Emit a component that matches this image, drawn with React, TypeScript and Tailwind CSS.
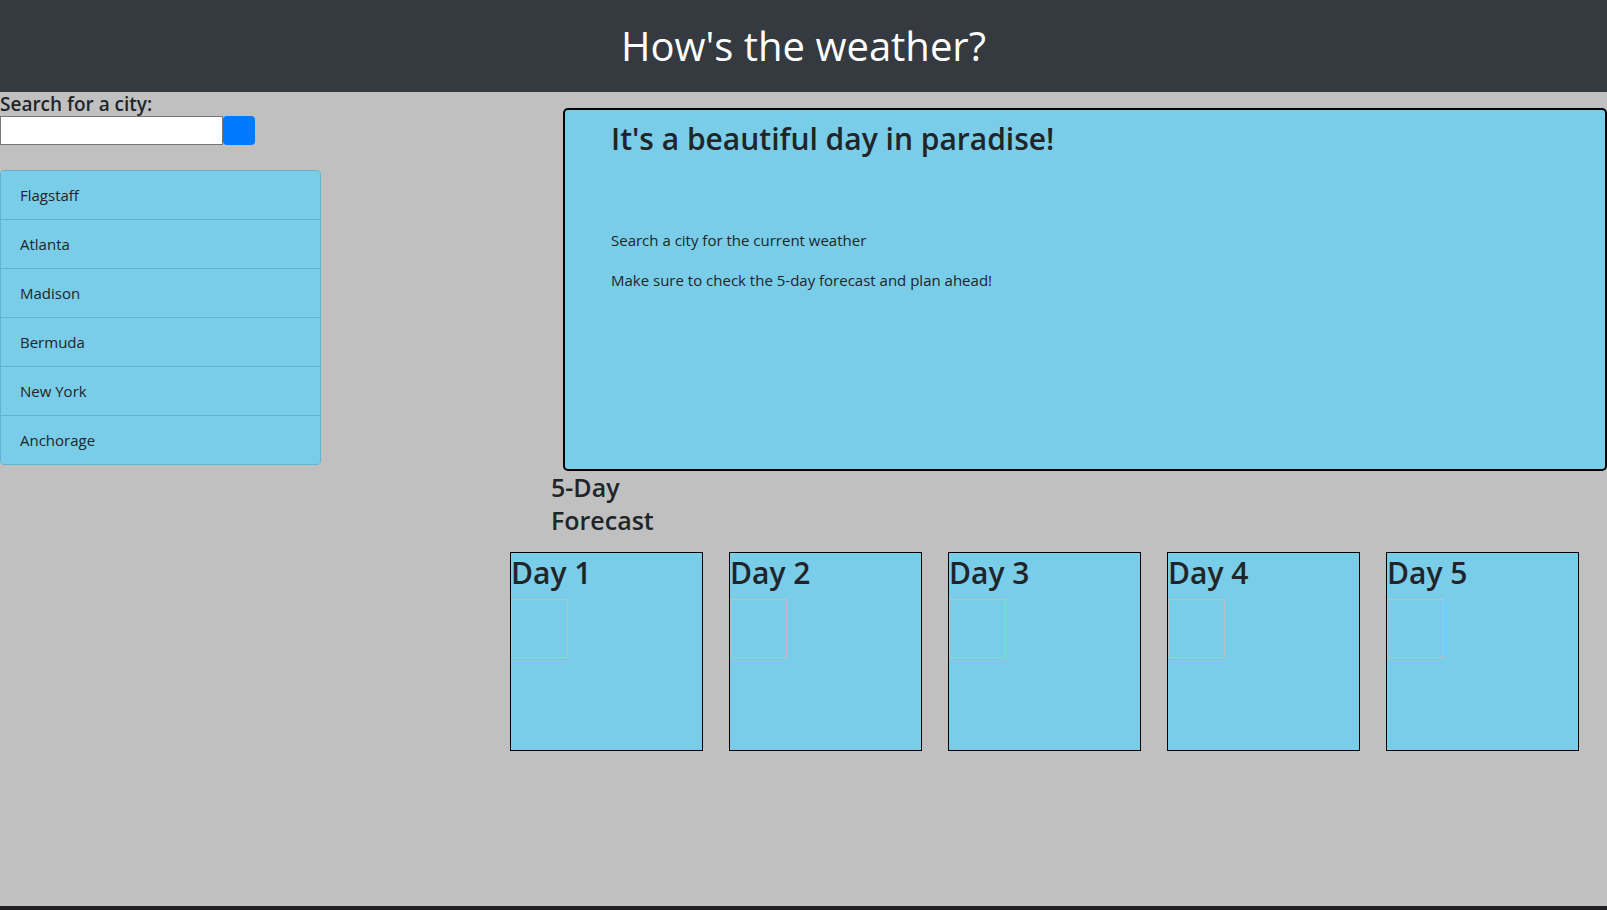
const cities = ["Flagstaff", "Atlanta", "Madison", "Bermuda", "New York", "Anchorage"];
const days = ["Day 1", "Day 2", "Day 3", "Day 4", "Day 5"];

function SearchPanel() {
  return (
    <aside className="w-[510px] shrink-0">
      <label className="block h-[24px] text-[19px] leading-[24px] font-semibold">
        Search for a city:
      </label>
      <div className="flex">
        <input
          type="text"
          className="w-[223px] h-[29px] bg-white border border-[#767676] outline-none"
        />
        <button className="w-[32px] h-[29px] bg-[#007bff] rounded-[4px]" />
      </div>
      <ul className="mt-[25px] w-[321px] rounded-[4px] border border-[#5db5d3] overflow-hidden">
        {cities.map((city, idx) => (
          <li
            key={city}
            className={
              "pl-[19px] flex items-center bg-[#7acde8] text-[15px] " +
              (idx > 0 ? "h-[49px] border-t border-[#5db5d3]" : "h-[48px]")
            }
          >
            {city}
          </li>
        ))}
      </ul>
    </aside>
  );
}

function Forecast() {
  return (
    <section>
      <h3 className="ml-[41px] w-[120px] text-[25px] leading-[33px] font-semibold">
        5-Day Forecast
      </h3>
      <div className="mt-[15px] flex gap-[26px]">
        {days.map((day) => (
          <div
            key={day}
            className="w-[193px] h-[199px] bg-[#7acde8] border border-black"
          >
            <h2 className="text-[30px] leading-[40px] font-semibold">{day}</h2>
            <div className="mt-[6px] w-[57px] h-[59px] border border-[#c4bfbf]" />
          </div>
        ))}
      </div>
    </section>
  );
}

export default function App() {
  return (
    <div
      className="min-h-[910px] flex flex-col bg-[#c0c0c0] text-[#212529]"
      style={{ fontFamily: "'Open Sans', 'Noto Sans', sans-serif" }}
    >
      <header className="h-[92px] bg-[#343a40] flex items-center justify-center">
        <h1 className="text-[40px] text-white font-normal">How's the weather?</h1>
      </header>
      <main className="flex-1 flex">
        <SearchPanel />
        <div className="flex-1 flex flex-col">
          <div className="mt-[16px] ml-[53px] h-[363px] bg-[#7acde8] border-2 border-black rounded-[5px] pl-[46px] pt-[10px]">
            <h2 className="text-[30px] leading-[38px] font-semibold">
              It's a beautiful day in paradise!
            </h2>
            <p className="mt-[70px] text-[15px] leading-[24px]">
              Search a city for the current weather
            </p>
            <p className="mt-[16px] text-[15px] leading-[24px]">
              Make sure to check the 5-day forecast and plan ahead!
            </p>
          </div>
          <Forecast />
        </div>
      </main>
      <div className="h-[4px] bg-[#1f2023]" />
    </div>
  );
}
